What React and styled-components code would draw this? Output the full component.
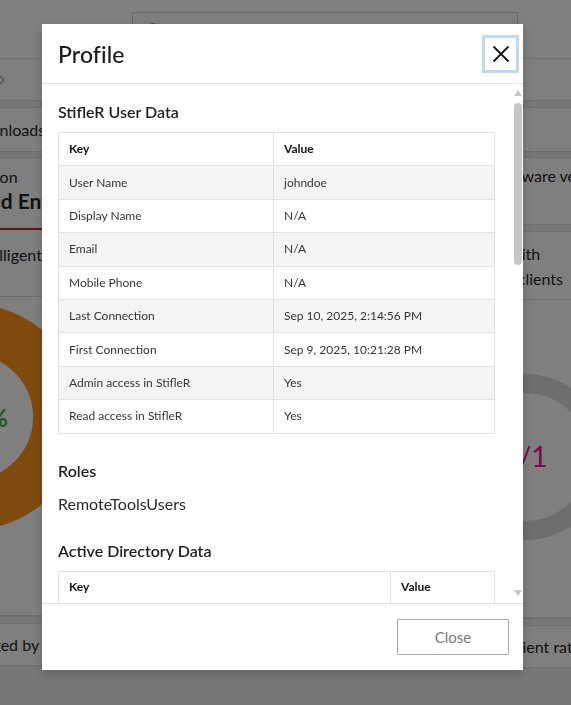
import React from "react";
import styled, { createGlobalStyle } from "styled-components";
import { ChevronRight, Search, ChevronDown } from "lucide-react";

const Global = createGlobalStyle`
  html, body { margin: 0; padding: 0; }
  body {
    font-family: Lato, "Noto Sans", sans-serif;
    background: #ffffff;
    overflow: hidden;
  }
  * { box-sizing: border-box; }
`;

/* ---------- background dashboard ---------- */

const Page = styled.div`
  width: 571px;
  height: 705px;
  overflow: hidden;
  background: #ffffff;
  color: #262626;
  display: flex;
  flex-direction: column;
`;

const TopBar = styled.div`
  height: 59px;
  flex: none;
  border-bottom: 1px solid #dedede;
  padding: 12px 0 0 132px;
`;

const SearchBox = styled.div`
  width: 386px;
  height: 32px;
  border: 1px solid #d2d2d2;
  display: flex;
  align-items: center;
  gap: 8px;
  padding: 0 8px 0 14px;
  font-size: 14px;
  color: #6b6b6b;
`;

const SearchHint = styled.span`
  flex: 1;
`;

const Scope = styled.span`
  display: flex;
  align-items: center;
  gap: 6px;
  color: #333;
`;

const Crumbs = styled.div`
  height: 42px;
  flex: none;
  border-bottom: 1px solid #dedede;
  display: flex;
  align-items: center;
  margin-left: -5px;
  color: #333;
`;

const Gap = styled.div`
  height: ${(p) => p.$h || 6}px;
  flex: none;
  background: #eeeeee;
`;

const TabBar = styled.div`
  height: 45px;
  flex: none;
  border-top: 1px solid #dedede;
  border-bottom: 1px solid #dedede;
  display: flex;
  align-items: center;
  font-size: 16px;
`;

const Indented = styled.div`
  margin-left: ${(p) => p.$indent}px;
  white-space: nowrap;
  font-size: ${(p) => p.$size || 16}px;
  font-weight: ${(p) => p.$weight || 400};
  line-height: ${(p) => p.$lh || 20}px;
`;

const CardRow = styled.div`
  flex: 1;
  display: flex;
  gap: 6px;
  margin-left: -200px;
  background: #eeeeee;
`;

const Column = styled.div`
  width: ${(p) => p.$w}px;
  flex: none;
  display: flex;
  flex-direction: column;
  gap: 6px;
`;

const Card = styled.div`
  background: #ffffff;
  border-top: 1px solid #dedede;
  border-bottom: 1px solid #dedede;
  display: flex;
  flex-direction: column;
`;

const Section = styled.div`
  height: ${(p) => p.$h}px;
  padding-top: ${(p) => p.$pt || 0}px;
  border-bottom: ${(p) => (p.$accent ? "2px solid #c62828" : p.$last ? "none" : "1px solid #dedede")};
  display: flex;
  flex-direction: column;
`;

const ChartSvg = styled.svg`
  margin-left: ${(p) => p.$indent}px;
  flex: none;
`;

/* ---------- modal ---------- */

const Overlay = styled.div`
  position: fixed;
  inset: 0;
  background: rgba(0, 0, 0, 0.5);
  display: flex;
  align-items: flex-start;
  padding: 24px 0 0 42px;
`;

const Modal = styled.div`
  width: 481px;
  height: 646px;
  background: #ffffff;
  display: flex;
  flex-direction: column;
  box-shadow: 0 3px 10px rgba(0, 0, 0, 0.18);
  color: #1c1c1c;
`;

const Header = styled.div`
  height: 60px;
  flex: none;
  border-bottom: 1px solid #e3e3e3;
  display: flex;
  align-items: center;
  justify-content: space-between;
  padding: 1px 4px 0 16px;
`;

const Title = styled.h1`
  margin: 0;
  font-size: 23px;
  font-weight: 500;
  color: #1a1a1a;
  letter-spacing: 0.1px;
`;

const CloseX = styled.button`
  width: 37px;
  height: 38px;
  margin-top: -1px;
  border: 3px solid #bcdaf3;
  background: #ffffff;
  display: flex;
  align-items: center;
  justify-content: center;
  padding: 0;
  cursor: pointer;
`;

const Body = styled.div`
  flex: 1;
  min-height: 0;
  display: flex;
`;

const Content = styled.div`
  flex: 1;
  min-width: 0;
  overflow: hidden;
  padding: 16px 13px 0 16px;
`;

const SectionTitle = styled.h2`
  margin: ${(p) => p.$mt || 0}px 0 8px;
  font-size: 16px;
  line-height: 24px;
  font-weight: 600;
  color: #1f1f1f;
`;

const Plain = styled.p`
  margin: 9px 0 0;
  font-size: 16px;
  line-height: 24px;
  color: #2a2a2a;
`;

const DataTable = styled.table`
  width: 100%;
  border-collapse: collapse;
  table-layout: fixed;
  border: 1px solid #e2e2e2;
  font-size: 12px;
  color: #363636;
`;

const Col = styled.col`
  width: ${(p) => p.$w}px;
`;

const Row = styled.tr`
  height: 33.4px;
  background: ${(p) => (p.$striped ? "#f4f4f4" : "#ffffff")};
`;

const Th = styled.th`
  text-align: left;
  font-weight: 700;
  color: #111;
  padding: 0 10px 2px;
  border: 1px solid #e2e2e2;
`;

const Td = styled.td`
  padding: 0 10px 1px;
  border: 1px solid #e2e2e2;
  white-space: nowrap;
  overflow: hidden;
`;

const ScrollTrack = styled.div`
  width: 15px;
  flex: none;
  display: flex;
  flex-direction: column;
  padding: 6px 0 7px 6px;
`;

const Arrow = styled.div`
  width: 0;
  height: 0;
  border-left: 4.5px solid transparent;
  border-right: 4.5px solid transparent;
  ${(p) =>
    p.$down
      ? "border-top: 6px solid #c4c4c4; margin-top: auto;"
      : "border-bottom: 6px solid #c4c4c4;"}
`;

const Thumb = styled.div`
  width: 8px;
  height: 162px;
  margin-top: 7px;
  border-radius: 4px;
  background: #c6c6c6;
`;

const Footer = styled.div`
  height: 67px;
  flex: none;
  border-top: 1px solid #e3e3e3;
  display: flex;
  justify-content: flex-end;
  padding: 15px 14px 0 0;
`;

const FooterButton = styled.button`
  width: 112px;
  height: 36px;
  background: #ffffff;
  border: 1px solid #a8a8a8;
  border-radius: 1px;
  font-family: Lato, "Noto Sans", sans-serif;
  font-size: 15px;
  color: #7a7a7a;
  cursor: pointer;
`;

const userData = [
  ["User Name", "johndoe"],
  ["Display Name", "N/A"],
  ["Email", "N/A"],
  ["Mobile Phone", "N/A"],
  ["Last Connection", "Sep 10, 2025, 2:14:56 PM"],
  ["First Connection", "Sep 9, 2025, 10:21:28 PM"],
  ["Admin access in StifleR", "Yes"],
  ["Read access in StifleR", "Yes"],
];

const adData = [
  ["sAMAccountName", "johndoe"],
  ["distinguishedName", "CN=John Doe,OU=Users"],
  ["memberOf", "RemoteToolsUsers"],
];

function Table({ rows, split }) {
  return (
    <DataTable>
      <colgroup>
        <Col $w={split} />
        <Col />
      </colgroup>
      <thead>
        <Row>
          <Th>Key</Th>
          <Th>Value</Th>
        </Row>
      </thead>
      <tbody>
        {rows.map(([k, v], i) => (
          <Row key={k} $striped={i % 2 === 0}>
            <Td>{k}</Td>
            <Td>{v}</Td>
          </Row>
        ))}
      </tbody>
    </DataTable>
  );
}

function Background() {
  return (
    <Page aria-hidden="true">
      <TopBar>
        <SearchBox>
          <Search size={13} strokeWidth={1.6} />
          <SearchHint>Search</SearchHint>
          <Scope>
            StifleR Server <ChevronDown size={12} />
          </Scope>
        </SearchBox>
      </TopBar>
      <Crumbs>
        <ChevronRight size={14} strokeWidth={1.5} />
      </Crumbs>
      <Gap $h={6} />
      <TabBar>
        <Indented $indent={-34}>Downloads</Indented>
      </TabBar>
      <Gap $h={5} />
      <CardRow>
        <Column $w={625}>
          <Card>
            <Section $h={72} $pt={9} $accent>
              <Indented $indent={165}>Version</Indented>
              <Indented $indent={131} $size={21} $weight={700} $lh={27}>
                Licensed Enterprise
              </Indented>
            </Section>
            <Section $h={67} $pt={15}>
              <Indented $indent={172}>Intelligent Delivery</Indented>
            </Section>
            <Section $h={319} $pt={6}>
              <ChartSvg $indent={56} width="228" height="228" viewBox="0 0 228 228">
                <circle cx="114" cy="114" r="88" fill="none" stroke="#ff951c" strokeWidth="50" />
                <text x="152" y="124" textAnchor="end" fontSize="24" fontWeight="700" fill="#3cb43c" fontFamily="Lato, sans-serif">
                  98%
                </text>
              </ChartSvg>
            </Section>
          </Card>
          <Card>
            <Section $h={41} $pt={11} $last>
              <Indented $indent={153}>Managed by server</Indented>
            </Section>
          </Card>
        </Column>
        <Column $w={300}>
          <Card>
            <Section $h={66} $pt={8} $last>
              <Indented $indent={62}>Software version</Indented>
            </Section>
          </Card>
          <Card>
            <Section $h={68} $pt={9}>
              <Indented $indent={19} $lh={25}>Devices with</Indented>
              <Indented $indent={19} $lh={25}>outdated clients</Indented>
            </Section>
            <Section $h={318} $pt={72}>
              <ChartSvg $indent={9} width="170" height="170" viewBox="0 0 170 170">
                <circle cx="85" cy="85" r="73.5" fill="none" stroke="#dcdcdc" strokeWidth="19" />
                <text x="85" y="95" textAnchor="middle" fontSize="28" fill="#f01494" fontFamily="Lato, sans-serif">
                  1/1
                </text>
              </ChartSvg>
            </Section>
          </Card>
          <Card>
            <Section $h={41} $pt={11} $last>
              <Indented $indent={77}>Client ratio</Indented>
            </Section>
          </Card>
        </Column>
      </CardRow>
    </Page>
  );
}

export default function App() {
  return (
    <>
      <Global />
      <Background />
      <Overlay>
        <Modal role="dialog" aria-label="Profile">
          <Header>
            <Title>Profile</Title>
            <CloseX aria-label="Close">
              <svg width="18" height="18" viewBox="0 0 18 18">
                <path d="M1.5 1.5 L16.5 16.5 M16.5 1.5 L1.5 16.5" stroke="#111" strokeWidth="1.8" fill="none" />
              </svg>
            </CloseX>
          </Header>
          <Body>
            <Content>
              <SectionTitle>StifleR User Data</SectionTitle>
              <Table rows={userData} split={215} />
              <SectionTitle $mt={25}>Roles</SectionTitle>
              <Plain>RemoteToolsUsers</Plain>
              <SectionTitle $mt={23}>Active Directory Data</SectionTitle>
              <Table rows={adData} split={332} />
            </Content>
            <ScrollTrack>
              <Arrow />
              <Thumb />
              <Arrow $down />
            </ScrollTrack>
          </Body>
          <Footer>
            <FooterButton>Close</FooterButton>
          </Footer>
        </Modal>
      </Overlay>
    </>
  );
}
